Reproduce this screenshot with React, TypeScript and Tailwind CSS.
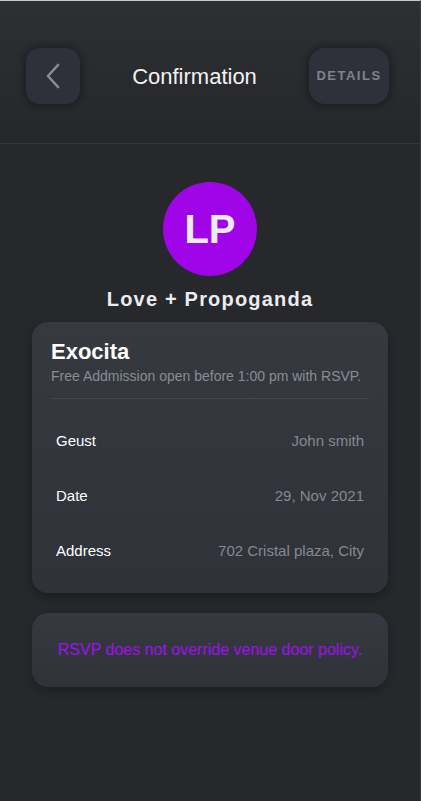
import React from "react";

const rows = [
  { label: "Geust", value: "John smith" },
  { label: "Date", value: "29, Nov 2021" },
  { label: "Address", value: "702 Cristal plaza, City" },
];

function Header() {
  return (
    <div className="h-[143px] border-b border-[#34363b] bg-gradient-to-b from-[#2e2f33] to-[#26272b] pt-[47px] pr-[31px] pl-[26px]">
      <div className="flex items-center justify-between">
        <button className="flex h-[56px] w-[54px] items-center justify-center rounded-[14px] bg-[#2e3139] shadow-[0_0_6px_3px_rgba(0,0,0,0.25)]">
          <svg width="16" height="26" viewBox="0 0 16 26" fill="none">
            <path d="M13 2 L3 13 L13 24" stroke="#8a8d94" strokeWidth="2.6" strokeLinecap="round" strokeLinejoin="round" />
          </svg>
        </button>
        <div className="text-[22px] text-[#f2f2f2]">Confirmation</div>
        <button className="flex h-[56px] w-[80px] items-center justify-center rounded-[16px] bg-[#2e3139] text-[13px] font-bold tracking-[1.5px] text-[#80838a] shadow-[0_0_6px_3px_rgba(0,0,0,0.25)]">
          DETAILS
        </button>
      </div>
    </div>
  );
}

function Organizer() {
  return (
    <div className="mt-[38px] flex justify-center">
      <div className="flex w-[208px] flex-col items-center rounded-[8px] bg-[#26282c] pb-[2px]">
        <div className="flex h-[94px] w-[94px] items-center justify-center rounded-full bg-[#a005e8] text-[40px] font-bold text-[#ececf0]">
          LP
        </div>
        <div className="mt-[8px] whitespace-nowrap text-[20px] font-bold tracking-[1.2px] text-[#ececf0]">
          Love + Propoganda
        </div>
      </div>
    </div>
  );
}

export default function App() {
  return (
    <div
      className="flex h-[801px] w-[421px] flex-col border-t border-r border-t-[#c9cacc] border-r-[#3a3c40] bg-[#27282c]"
      style={{ fontFamily: '"Liberation Sans", Arial, sans-serif' }}
    >
      <Header />
      <Organizer />
      <div className="mx-[32px] mt-[6px] rounded-[16px] bg-gradient-to-b from-[#363940] to-[#2f3239] px-[19px] pt-[17px] pb-[34px] shadow-[0_4px_10px_rgba(0,0,0,0.3)]">
        <div className="text-[22px] leading-[26px] font-bold text-white">Exocita</div>
        <div className="mt-[1px] text-[14px] text-[#8a8d93]">
          Free Addmission open before 1:00 pm with RSVP.
        </div>
        <div className="mt-[11px] h-px bg-[#45484f]" />
        <div className="flex flex-col gap-[38px] px-[5px] pt-[33px]">
          {rows.map((r) => (
            <div key={r.label} className="flex items-center justify-between text-[15px] leading-[17px]">
              <span className="text-white">{r.label}</span>
              <span className="text-[#868990]">{r.value}</span>
            </div>
          ))}
        </div>
      </div>
      <div className="mx-[32px] mt-[20px] flex h-[74px] items-center justify-center rounded-[16px] bg-gradient-to-b from-[#363940] to-[#2f3239] shadow-[0_4px_10px_rgba(0,0,0,0.25)]">
        <span className="text-[16px] text-[#a010f0]">RSVP does not override venue door policy.</span>
      </div>
    </div>
  );
}
